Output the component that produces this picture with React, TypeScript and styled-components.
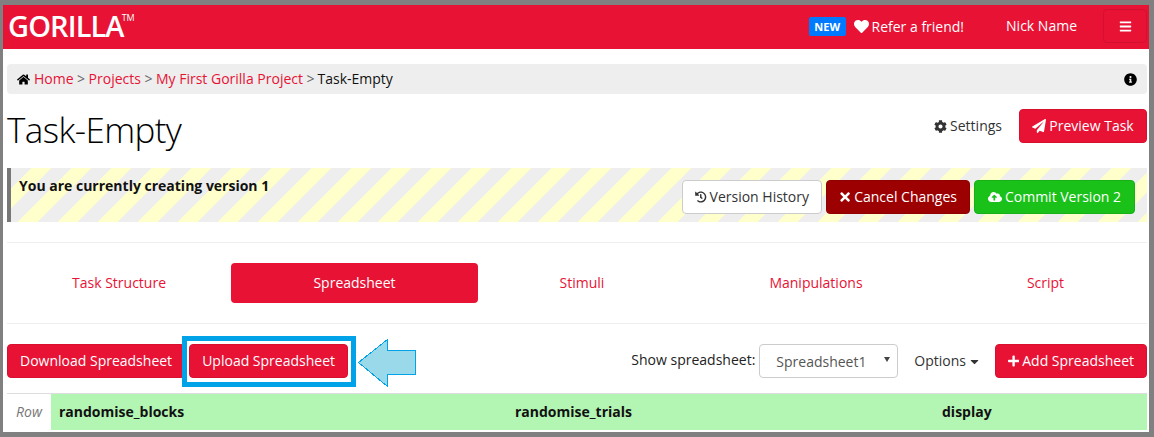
import React from 'react';
import styled, { createGlobalStyle } from 'styled-components';
import {
  FaBars,
  FaCaretDown,
  FaCloudUploadAlt,
  FaCog,
  FaHeart,
  FaHistory,
  FaHome,
  FaInfoCircle,
  FaPaperPlane,
  FaPlus,
  FaTimes,
} from 'react-icons/fa';

const RED = '#e81235';

const GlobalStyle = createGlobalStyle`
  html, body {
    margin: 0;
    padding: 0;
    background: #fff;
  }
  body {
    font-family: 'Open Sans', 'Liberation Sans', sans-serif;
    font-size: 14px;
    line-height: 20px;
    color: #111;
  }
  * {
    box-sizing: border-box;
  }
`;

const Frame = styled.div`
  position: relative;
  width: 1154px;
  height: 437px;
  border-style: solid;
  border-color: #808080;
  border-width: 5px 5px 5px 3px;
  overflow: hidden;
  background: #fff;
`;

const NavBar = styled.header`
  height: 44px;
  background: ${RED};
  display: flex;
  align-items: center;
  color: #fff;
  padding: 0 2px 0 5px;
`;

const Logo = styled.div`
  font-size: 29px;
  font-weight: 600;
  letter-spacing: -0.9px;
  line-height: 40px;
  margin-bottom: 2px;
  display: flex;
  align-items: flex-start;
  sup {
    font-size: 9px;
    font-weight: 400;
    line-height: 10px;
    margin: 7px 0 0 -2px;
    letter-spacing: 0;
  }
`;

const NavRight = styled.div`
  margin-left: auto;
  margin-top: -2px;
  display: flex;
  align-items: center;
`;

const NewBadge = styled.span`
  background: #007bff;
  border-radius: 2px;
  font-size: 11px;
  font-weight: 700;
  line-height: 19px;
  height: 19px;
  padding: 0 5.5px;
  margin: 1px 8px 0 0;
`;

const Refer = styled.span`
  display: flex;
  align-items: center;
  gap: 3px;
  margin-top: 1px;
  svg {
    font-size: 15px;
  }
`;

const UserName = styled.span`
  margin-left: 42px;
`;

const MenuToggle = styled.button`
  width: 44px;
  height: 34px;
  margin-left: 26px;
  background: transparent;
  border: 1px solid #d41030;
  border-radius: 4px;
  color: #fff;
  display: flex;
  align-items: center;
  justify-content: center;
  font-size: 13px;
  padding: 0;
`;

const Content = styled.main`
  padding: 15px 2px 0 4px;
`;

const Breadcrumb = styled.nav`
  height: 30px;
  background: #eee;
  border-radius: 4px;
  display: flex;
  align-items: center;
  padding: 0 10px;
  color: #666;
  svg {
    color: #000;
    font-size: 13px;
  }
  a {
    color: ${RED};
    text-decoration: none;
    margin: 0 3.5px;
  }
  a:first-of-type {
    margin-left: 4px;
  }
  a:last-of-type {
    margin-left: 3.5px;
  }
  b {
    font-weight: 400;
    color: #111;
    margin-left: 3px;
  }
  i {
    margin-left: auto;
    display: flex;
    font-size: 14px;
  }
`;

const TitleRow = styled.div`
  height: 74px;
  display: flex;
  align-items: flex-start;
  justify-content: space-between;
`;

const Title = styled.h1`
  margin: 14px 0 0;
  font-size: 35px;
  line-height: 44px;
  font-weight: 300;
  color: #000;
  letter-spacing: -0.6px;
`;

const TitleActions = styled.div`
  display: flex;
  align-items: center;
  gap: 17px;
  margin-top: 15px;
`;

const Settings = styled.span`
  color: #333;
  display: flex;
  align-items: center;
  gap: 3px;
  svg {
    font-size: 13px;
  }
`;

type Tone = 'red' | 'dark' | 'green' | 'plain';

const toneColours: Record<Tone, { bg: string; fg: string; line: string }> = {
  red: { bg: RED, fg: '#fff', line: '#d81030' },
  dark: { bg: '#9c0000', fg: '#fff', line: '#8f0000' },
  green: { bg: '#19c119', fg: '#fff', line: '#17b017' },
  plain: { bg: '#fff', fg: '#333', line: '#ccc' },
};

const Button = styled.button<{ $tone: Tone; $width?: number }>`
  height: 34px;
  width: ${(p) => (p.$width ? `${p.$width}px` : 'auto')};
  padding: 0 12px;
  border-radius: 4px;
  border: 1px solid ${(p) => toneColours[p.$tone].line};
  background: ${(p) => toneColours[p.$tone].bg};
  color: ${(p) => toneColours[p.$tone].fg};
  font-family: inherit;
  font-size: 14px;
  line-height: 20px;
  display: inline-flex;
  align-items: center;
  justify-content: center;
  gap: 3px;
  white-space: nowrap;
  svg {
    font-size: 14px;
  }
`;

const VersionBanner = styled.section`
  height: 54px;
  border-left: 4px solid #777;
  background-color: #eee;
  background-image: linear-gradient(
    135deg,
    #ffc 25%,
    #eee 25%,
    #eee 50%,
    #ffc 50%,
    #ffc 75%,
    #eee 75%
  );
  background-size: 40px 40px;
  background-position: 21px 0;
  display: flex;
  justify-content: space-between;
  padding: 0 12px 0 8px;
`;

const BannerText = styled.strong`
  font-weight: 700;
  margin-top: 8px;
  color: #111;
`;

const BannerActions = styled.div`
  display: flex;
  gap: 4px;
  align-items: center;
  margin-top: 4px;
`;

const Tabs = styled.div`
  display: grid;
  grid-template-columns: 224px 247px 208px 260px 199px;
  padding: 20px 0;
  margin-top: 20px;
  border-top: 1px solid #eee;
  border-bottom: 1px solid #eee;
`;

const Tab = styled.div<{ $active?: boolean }>`
  height: 40px;
  border-radius: 4px;
  display: flex;
  align-items: center;
  justify-content: center;
  color: ${(p) => (p.$active ? '#fff' : RED)};
  background: ${(p) => (p.$active ? RED : 'transparent')};
`;

const Toolbar = styled.div`
  margin-top: 20px;
  display: flex;
  align-items: center;
  gap: 4px;
`;

const Spacer = styled.div`
  flex: 1;
`;

const SelectLabel = styled.span`
  color: #222;
  margin-top: -2px;
`;

const SelectBox = styled.div`
  width: 139px;
  height: 34px;
  border: 1px solid #ccc;
  border-radius: 4px;
  color: #555;
  display: flex;
  align-items: center;
  padding: 1px 0 0 16px;
  position: relative;
  &::after {
    content: '';
    position: absolute;
    right: 7px;
    top: 12px;
    border-left: 3px solid transparent;
    border-right: 3px solid transparent;
    border-top: 5px solid #444;
  }
`;

const OptionsLink = styled.span`
  color: #333;
  display: flex;
  align-items: center;
  gap: 2px;
  margin: 0 10px 0 12px;
  svg {
    font-size: 13px;
  }
`;

const SheetHeader = styled.div`
  margin-top: 15px;
  height: 37px;
  display: grid;
  grid-template-columns: 44px 456px 427px 1fr;
  border-top: 1px solid #ddd;
  align-items: center;
  font-weight: 700;
  color: #111;
`;

const RowLabel = styled.div`
  height: 100%;
  display: flex;
  align-items: center;
  padding-left: 9px;
  font-style: italic;
  font-weight: 400;
  color: #777;
`;

const SheetCell = styled.div`
  height: 100%;
  display: flex;
  align-items: center;
  padding-left: 8px;
  background: #b3f5b3;
`;

const Highlight = styled.div`
  position: absolute;
  left: 179px;
  top: 331px;
  width: 174px;
  height: 51px;
  border: 5px solid #00a2e8;
  pointer-events: none;
`;

const Callout = styled.svg`
  position: absolute;
  left: 355px;
  top: 334px;
`;

export default function App() {
  return (
    <>
      <GlobalStyle />
      <Frame>
        <NavBar>
          <Logo>
            GORILLA<sup>TM</sup>
          </Logo>
          <NavRight>
            <NewBadge>NEW</NewBadge>
            <Refer>
              <FaHeart />
              Refer a friend!
            </Refer>
            <UserName>Nick Name</UserName>
            <MenuToggle aria-label="Menu">
              <FaBars />
            </MenuToggle>
          </NavRight>
        </NavBar>
        <Content>
          <Breadcrumb>
            <FaHome />
            <a>Home</a>&gt;<a>Projects</a>&gt;<a>My First Gorilla Project</a>&gt;
            <b>Task-Empty</b>
            <i>
              <FaInfoCircle />
            </i>
          </Breadcrumb>
          <TitleRow>
            <Title>Task-Empty</Title>
            <TitleActions>
              <Settings>
                <FaCog />
                Settings
              </Settings>
              <Button $tone="red" $width={128}>
                <FaPaperPlane />
                Preview Task
              </Button>
            </TitleActions>
          </TitleRow>
          <VersionBanner>
            <BannerText>You are currently creating version 1</BannerText>
            <BannerActions>
              <Button $tone="plain" $width={140}>
                <FaHistory />
                Version History
              </Button>
              <Button $tone="dark" $width={144}>
                <FaTimes />
                Cancel Changes
              </Button>
              <Button $tone="green" $width={161}>
                <FaCloudUploadAlt />
                Commit Version 2
              </Button>
            </BannerActions>
          </VersionBanner>
          <Tabs>
            <Tab>Task Structure</Tab>
            <Tab $active>Spreadsheet</Tab>
            <Tab>Stimuli</Tab>
            <Tab>Manipulations</Tab>
            <Tab>Script</Tab>
          </Tabs>
          <Toolbar>
            <Button $tone="red">Download Spreadsheet</Button>
            <Button $tone="red" $width={159}>
              Upload Spreadsheet
            </Button>
            <Spacer />
            <SelectLabel>Show spreadsheet:</SelectLabel>
            <SelectBox>Spreadsheet1</SelectBox>
            <OptionsLink>
              Options
              <FaCaretDown />
            </OptionsLink>
            <Button $tone="red" $width={152}>
              <FaPlus />
              Add Spreadsheet
            </Button>
          </Toolbar>
          <SheetHeader>
            <RowLabel>Row</RowLabel>
            <SheetCell>randomise_blocks</SheetCell>
            <SheetCell>randomise_trials</SheetCell>
            <SheetCell>display</SheetCell>
          </SheetHeader>
        </Content>
        <Highlight />
        <Callout width="60" height="50" viewBox="0 0 60 50" shapeRendering="crispEdges">
          <path
            d="M0.5 23.5 L29.5 0.5 V11.5 H57.5 V35.5 H29.5 V47.5 Z"
            fill="#99d9ea"
            stroke="#00a2e8"
            strokeWidth="1"
          />
        </Callout>
      </Frame>
    </>
  );
}
